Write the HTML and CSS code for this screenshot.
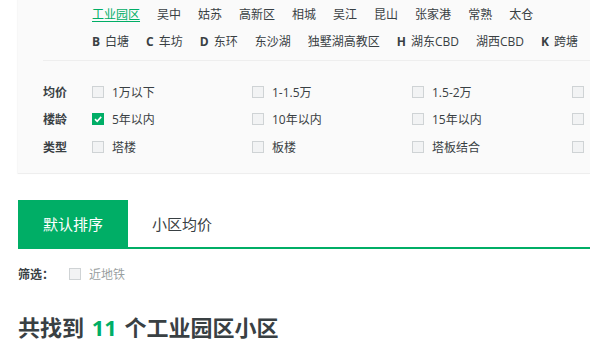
FILE: index.html
```html
<!DOCTYPE html>
<html lang="zh-CN">
<head>
<meta charset="utf-8">
<title>小区列表</title>
<link rel="stylesheet" href="styles.css">
</head>
<body>
<div class="page">
  <div class="panel">
    <div class="regions">
      <div class="region-row">
        <a class="region active">工业园区</a>
        <a class="region">吴中</a>
        <a class="region">姑苏</a>
        <a class="region">高新区</a>
        <a class="region">相城</a>
        <a class="region">吴江</a>
        <a class="region">昆山</a>
        <a class="region">张家港</a>
        <a class="region">常熟</a>
        <a class="region">太仓</a>
      </div>
      <div class="region-row">
        <a class="region"><b class="letter">B</b>白塘</a>
        <a class="region"><b class="letter">C</b>车坊</a>
        <a class="region"><b class="letter">D</b>东环</a>
        <a class="region">东沙湖</a>
        <a class="region">独墅湖高教区</a>
        <a class="region"><b class="letter">H</b>湖东CBD</a>
        <a class="region">湖西CBD</a>
        <a class="region"><b class="letter">K</b>跨塘</a>
      </div>
    </div>
    <div class="filters">
      <div class="filter-row">
        <span class="filter-label">均价</span>
        <label class="opt"><i class="box"></i>1万以下</label>
        <label class="opt"><i class="box"></i>1-1.5万</label>
        <label class="opt"><i class="box"></i>1.5-2万</label>
        <label class="opt"><i class="box"></i></label>
      </div>
      <div class="filter-row">
        <span class="filter-label">楼龄</span>
        <label class="opt"><i class="box checked"><svg viewBox="0 0 12 12" width="12" height="12"><path d="M3 6.2 L5.2 8.3 L9.2 3.9" fill="none" stroke="#fff" stroke-width="1.6"/></svg></i>5年以内</label>
        <label class="opt"><i class="box"></i>10年以内</label>
        <label class="opt"><i class="box"></i>15年以内</label>
        <label class="opt"><i class="box"></i></label>
      </div>
      <div class="filter-row">
        <span class="filter-label">类型</span>
        <label class="opt"><i class="box"></i>塔楼</label>
        <label class="opt"><i class="box"></i>板楼</label>
        <label class="opt"><i class="box"></i>塔板结合</label>
        <label class="opt"><i class="box"></i></label>
      </div>
    </div>
  </div>

  <div class="tabs">
    <a class="tab active">默认排序</a>
    <a class="tab">小区均价</a>
  </div>

  <div class="screen">
    <span class="screen-label">筛选：</span>
    <label class="opt small"><i class="box"></i>近地铁</label>
  </div>

  <h2 class="total">共找到 <span class="num">11</span> 个工业园区小区</h2>
</div>
</body>
</html>
```

FILE: styles.css
```css
html, body {
  margin: 0;
  padding: 0;
  overflow: hidden;
  background: #fff;
}
body {
  font-family: "Open Sans", "Noto Sans CJK SC", sans-serif;
  color: #394043;
  font-size: 12px;
}
.page {
  padding-left: 18px;
}
.panel {
  background: #fafafa;
  border-bottom: 1px solid #eeeeee;
  overflow: hidden;
  box-shadow: -1px 0 1px rgba(0,0,0,0.03);
}
.regions {
  margin-left: 25px;
  padding: 1px 0 5px 49px;
  border-bottom: 1px solid #eeeeee;
}
.region-row {
  display: flex;
  gap: 17px;
  height: 27px;
  line-height: 27px;
  white-space: nowrap;
}
.region {
  color: #394043;
  cursor: pointer;
}
.region.active {
  color: #00ae66;
  text-decoration: underline;
  text-underline-offset: 2px;
}
.letter {
  font-weight: 700;
  margin-right: 5px;
}
.filters {
  padding: 17px 0 12px 25px;
}
.filter-row {
  display: flex;
  align-items: center;
  height: 27.5px;
  white-space: nowrap;
}
.filter-label {
  width: 49px;
  font-weight: 700;
  flex: none;
}
.opt {
  display: flex;
  align-items: center;
  gap: 8px;
  width: 160px;
  flex: none;
}
.box {
  display: block;
  width: 10px;
  height: 10px;
  border: 1px solid #cfd3d5;
  background: #f2f3f4;
  flex: none;
}
.box.checked {
  width: 12px;
  height: 12px;
  border: none;
  background: #00ae66;
}
.box svg {
  display: block;
}
.tabs {
  display: flex;
  margin-top: 26px;
  height: 47px;
  border-bottom: 2px solid #00ae66;
}
.tab {
  display: flex;
  align-items: center;
  font-size: 15px;
  padding: 0 24px;
  color: #394043;
}
.tab.active {
  background: #00ae66;
  color: #fff;
  width: 110px;
  box-sizing: border-box;
  justify-content: center;
  padding: 0;
}
.screen {
  display: flex;
  align-items: center;
  height: 24px;
  margin-top: 13px;
}
.screen-label {
  font-weight: 700;
  width: 51px;
}
.opt.small {
  width: auto;
  color: #9a9fa1;
}
.total {
  margin: 26px 0 0;
  font-size: 22px;
  line-height: 30px;
  font-weight: 700;
  color: #394043;
  word-spacing: 2px;
}
.num {
  color: #00ae66;
}
```
